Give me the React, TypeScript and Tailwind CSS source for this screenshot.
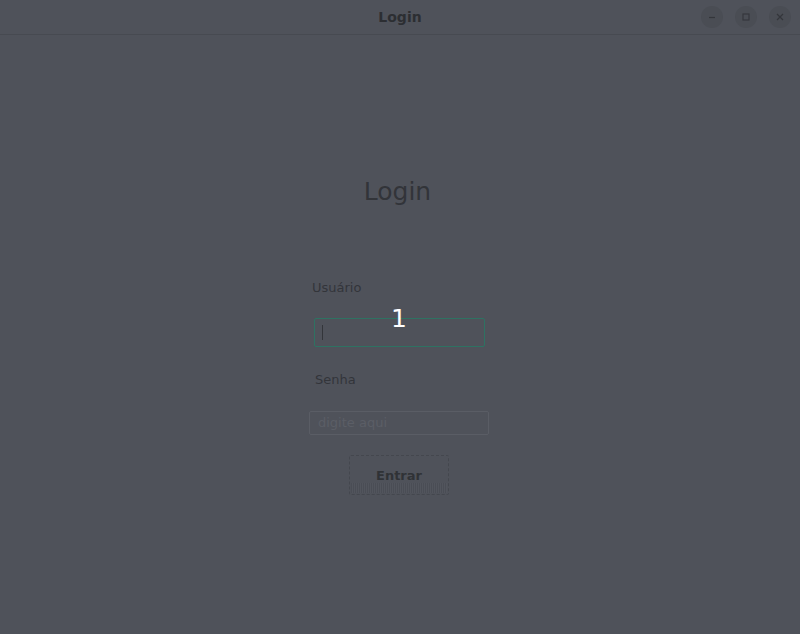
import React from 'react';

const WindowButton = ({ children }: { children: React.ReactNode }) => (
  <div className="w-[22px] h-[22px] rounded-full bg-[#4a4d54] flex items-center justify-center">
    {children}
  </div>
);

const App = () => {
  return (
    <div
      className="w-[800px] h-[634px] bg-[#4f525a] flex flex-col overflow-hidden"
      style={{ fontFamily: '"DejaVu Sans", "Noto Sans", sans-serif' }}
    >
      {/* title bar */}
      <div className="h-[35px] border-b border-[#474a51] flex items-center relative">
        <div className="flex-1 text-center text-[14px] font-bold text-[#2c2e32] pt-[1px]">Login</div>
        <div className="absolute right-[9px] top-[6px] flex gap-[12px]">
          <WindowButton>
            <svg width="10" height="10" viewBox="0 0 10 10">
              <path d="M2 5.5h6" stroke="#34363b" strokeWidth="1.2" />
            </svg>
          </WindowButton>
          <WindowButton>
            <svg width="10" height="10" viewBox="0 0 10 10">
              <rect x="2" y="2" width="6" height="6" fill="none" stroke="#34363b" strokeWidth="1.1" />
            </svg>
          </WindowButton>
          <WindowButton>
            <svg width="10" height="10" viewBox="0 0 10 10">
              <path d="M2 2l6 6M8 2l-6 6" stroke="#34363b" strokeWidth="1.2" />
            </svg>
          </WindowButton>
        </div>
      </div>

      {/* content */}
      <div className="flex-1 flex flex-col items-center">
        <h1 className="mt-[142px] text-[25px] text-[#323439] leading-[30px] ml-[-5px]">Login</h1>

        <div className="mt-[73px] ml-[-2px] w-[180px] flex flex-col relative">
          <label className="text-[13px] text-[#33353a] ml-[3px] leading-[16px]">Usuário</label>
          <div className="absolute left-0 right-0 top-[24px] text-center text-white text-[25px] leading-[30px]">1</div>
          <div className="mt-[22px] ml-[5px] w-[171px] h-[29px] rounded-[2px] border-[1.5px] border-[#2e7262] flex items-center pl-[7px]">
            <div className="w-[1px] h-[15px] bg-[#33353a]" />
          </div>

          <label className="mt-[25px] text-[13px] text-[#33353a] ml-[6px] leading-[16px]">Senha</label>
          <div className="mt-[23px] w-[180px] h-[24px] rounded-[2px] border border-[#5a5d65] flex items-center pl-[8px] text-[13px] text-[#5b5e66]">
            digite aqui
          </div>

          <div className="mt-[20px] self-center w-[100px] h-[40px] rounded-[2px] border border-dashed border-[#44474e] relative flex items-center justify-center">
            <div className="absolute left-[1px] right-[1px] bottom-[1px] h-[10px] bg-[repeating-linear-gradient(90deg,#4a4d55_0px,#4a4d55_1px,#52555d_1px,#52555d_2px)]" />
            <span className="relative text-[13px] font-bold text-[#303236] pt-[1px]">Entrar</span>
          </div>
        </div>
      </div>
    </div>
  );
};

export default App;
